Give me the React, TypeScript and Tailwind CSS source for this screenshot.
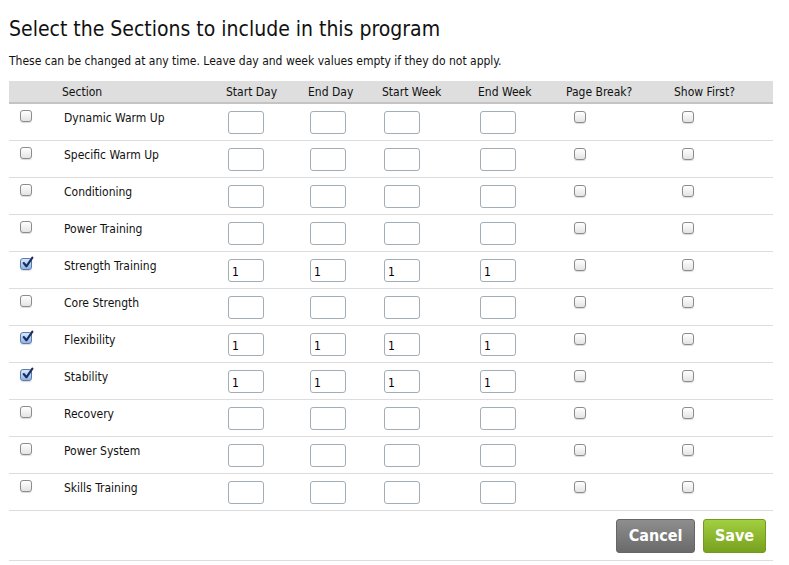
import React from "react"

type Row = { name: string; checked?: boolean; values?: boolean }

const rows: Row[] = [
  { name: "Dynamic Warm Up" },
  { name: "Specific Warm Up" },
  { name: "Conditioning" },
  { name: "Power Training" },
  { name: "Strength Training", checked: true, values: true },
  { name: "Core Strength" },
  { name: "Flexibility", checked: true, values: true },
  { name: "Stability", checked: true, values: true },
  { name: "Recovery" },
  { name: "Power System" },
  { name: "Skills Training" },
]

const cols = "grid grid-cols-[49px_164px_82px_74px_96px_88px_108px_103px]"

function Box({ checked }: { checked?: boolean }) {
  return (
    <span
      className={
        checked
          ? "relative block w-[12px] h-[12px] rounded-[3px] border border-[#5a7bab] bg-gradient-to-b from-[#d8e8fb] to-[#8fb6e6] shadow-[0_1px_1px_rgba(0,0,0,0.15)]"
          : "relative block w-[12px] h-[12px] rounded-[3px] border border-[#8c8c8c] bg-gradient-to-b from-white to-[#e4e4e4] shadow-[0_1px_1px_rgba(0,0,0,0.15)]"
      }
    >
      {checked && (
        <svg viewBox="0 0 12 12" className="absolute -top-[3px] left-[0px] w-[13px] h-[13px]">
          <path d="M2.5 6.5 L5 9.5 L10.5 1.5" fill="none" stroke="#1b2f5e" strokeWidth="2" strokeLinecap="round" strokeLinejoin="round" />
        </svg>
      )}
    </span>
  )
}

function Field({ value }: { value?: string }) {
  return (
    <input
      readOnly
      value={value ?? ""}
      className="w-[36px] h-[23px] rounded-[3px] border border-[#a3adb5] bg-white px-[3px] pt-[3px] text-[12px] text-black outline-none"
    />
  )
}

export default function App() {
  return (
    <div className="min-h-screen bg-white pl-[9px] pr-[16px] font-['DejaVu_Sans',sans-serif] font-stretch-condensed text-[#111]">
      <h1 className="pt-[16px] text-[21px] leading-[26px] text-[#111]">
        Select the Sections to include in this program
      </h1>
      <p className="mt-[12px] text-[12px] leading-[14px]">
        These can be changed at any time. Leave day and week values empty if they do not apply.
      </p>

      <div className="mt-[13px] w-[764px]">
        <div className={`${cols} h-[23px] items-center bg-[#dedede] border-b-2 border-[#c4c4c4] text-[12px]`}>
          <div />
          <div className="pl-[4px]">Section</div>
          <div className="pl-[4px]">Start Day</div>
          <div className="pl-[4px]">End Day</div>
          <div className="pl-[4px]">Start Week</div>
          <div className="pl-[4px]">End Week</div>
          <div className="pl-[4px]">Page Break?</div>
          <div className="pl-[4px]">Show First?</div>
        </div>

        {rows.map((r) => (
          <div key={r.name} className={`${cols} h-[37px] border-b border-[#dddddd] text-[12px]`}>
            <div className="pl-[11px] pt-[6px]">
              <Box checked={r.checked} />
            </div>
            <div className="pl-[6px] pt-[7px] leading-[14px]">{r.name}</div>
            <div className="pl-[6px] pt-[7px]"><Field value={r.values ? "1" : ""} /></div>
            <div className="pl-[6px] pt-[7px]"><Field value={r.values ? "1" : ""} /></div>
            <div className="pl-[6px] pt-[7px]"><Field value={r.values ? "1" : ""} /></div>
            <div className="pl-[6px] pt-[7px]"><Field value={r.values ? "1" : ""} /></div>
            <div className="pl-[12px] pt-[7px]"><Box /></div>
            <div className="pl-[12px] pt-[7px]"><Box /></div>
          </div>
        ))}

        <div className="flex justify-end gap-[8px] pt-[8px] pb-[7px] pr-[7px] border-b border-[#dddddd]">
          <button className="w-[79px] h-[34px] rounded-[3px] bg-gradient-to-b from-[#8e8e8e] to-[#6a6a6a] border border-[#666] text-white text-[16px] font-semibold">
            Cancel
          </button>
          <button className="w-[63px] h-[34px] rounded-[3px] bg-gradient-to-b from-[#a2cf3f] to-[#78a11e] border border-[#74991f] text-white text-[16px] font-semibold">
            Save
          </button>
        </div>
      </div>
    </div>
  )
}
